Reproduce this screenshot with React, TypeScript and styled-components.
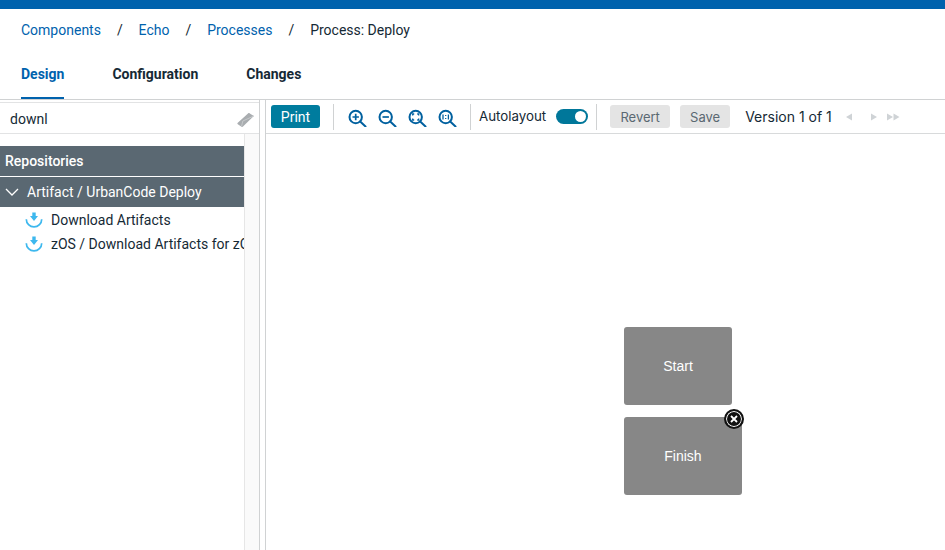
import styled, { createGlobalStyle } from "styled-components"

const GlobalStyle = createGlobalStyle`
  html, body {
    margin: 0;
    padding: 0;
    background: #fff;
  }
  * {
    box-sizing: border-box;
  }
`

const crumbs = ["Components", "Echo", "Processes"]
const tabs = ["Design", "Configuration", "Changes"]

const ZoomIcon = ({ kind }: { kind: "in" | "out" | "fit" | "actual" }) => (
  <S.Zoom width="20" height="20" viewBox="0 0 20 20" fill="none" stroke="#00609f" strokeWidth="2">
    <circle cx="8.700" cy="10" r="6.200" />
    <path d="M13.200 14.500l5.300 5" strokeLinecap="round" />
    {kind === "in" && <path d="M5.500 10h6.400M8.700 6.800v6.400" strokeWidth="1.700" />}
    {kind === "out" && <path d="M5.500 10h6.400" strokeWidth="1.700" />}
    {kind === "fit" && (
      <path d="M5.700 8.500V7h1.500M10.200 7h1.500v1.500M11.700 11.500V13h-1.500M7.200 13H5.700v-1.500" strokeWidth="1.300" />
    )}
    {kind === "actual" && (
      <path d="M6 7.400v5.200M11.400 7.400v5.200M8.700 8v1M8.700 11v1" strokeWidth="1.300" />
    )}
  </S.Zoom>
)

const DownloadIcon = () => (
  <S.ItemIcon width="18" height="16" viewBox="0 0 18 16">
    <path d="M1.300 7.200a7.700 7.700 0 0 0 15.400 0" fill="none" stroke="#3db8ee" strokeWidth="1.700" />
    <path d="M7.300 0.500h3.400v3.600h2.300L9 9 5 4.100h2.300z" fill="#3db8ee" />
  </S.ItemIcon>
)

const App = () => {
  return (
    <S.Page>
      <GlobalStyle />
      <S.TopBar />
      <S.Breadcrumbs>
        {crumbs.map((c) => (
          <S.CrumbGroup key={c}>
            <S.Crumb>{c}</S.Crumb>
            <S.Slash>/</S.Slash>
          </S.CrumbGroup>
        ))}
        <S.Current>Process: Deploy</S.Current>
      </S.Breadcrumbs>
      <S.Tabs>
        {tabs.map((t) => (
          <S.Tab key={t} $active={t === "Design"}>
            {t}
          </S.Tab>
        ))}
      </S.Tabs>
      <S.Main>
        <S.Sidebar>
          <S.Search>
            <S.SearchText>downl</S.SearchText>
            <S.Eraser width="18" height="16" viewBox="0 0 18 16">
              <path d="M0.500 11L11 1.500c.6-.5 1.200-.5 1.800-.1l4 2.600-10.800 10.600c-.5.500-1 .500-1.500.200L.8 12.300c-.5-.4-.6-.9-.3-1.300z" fill="#a9adb0" />
              <path d="M4.500 14.500L5.800 9 16.800 4" fill="none" stroke="#c6c9cb" strokeWidth="1" />
            </S.Eraser>
          </S.Search>
          <S.ListArea>
            <S.List>
              <S.SectionHeader>Repositories</S.SectionHeader>
              <S.GroupHeader>
                <svg width="14" height="8" viewBox="0 0 14 8" fill="none" stroke="#fff" strokeWidth="1.300">
                  <path d="M1 1l6 6 6-6" />
                </svg>
                Artifact / UrbanCode Deploy
              </S.GroupHeader>
              <S.Item>
                <DownloadIcon />
                <S.ItemText>Download Artifacts</S.ItemText>
              </S.Item>
              <S.Item>
                <DownloadIcon />
                <S.ItemText>zOS / Download Artifacts for zOS</S.ItemText>
              </S.Item>
            </S.List>
            <S.Scrollbar />
          </S.ListArea>
        </S.Sidebar>
        <S.Editor>
          <S.Toolbar>
            <S.PrintButton>Print</S.PrintButton>
            <S.Separator $left={13} $right={13} />
            <S.ZoomGroup>
              <ZoomIcon kind="in" />
              <ZoomIcon kind="out" />
              <ZoomIcon kind="fit" />
              <ZoomIcon kind="actual" />
            </S.ZoomGroup>
            <S.Separator $left={13} $right={8} />
            <S.ToggleLabel>Autolayout</S.ToggleLabel>
            <S.Toggle>
              <S.Knob />
            </S.Toggle>
            <S.Separator $left={8} $right={13} />
            <S.GreyButton $width={60}>Revert</S.GreyButton>
            <S.GreyButton $width={50}>Save</S.GreyButton>
            <S.Version>Version 1 of 1</S.Version>
            <S.Pager>
              <svg width="60" height="8" viewBox="0 0 60 8" fill="#cfd3d6">
                <path d="M0 4l6-3.500v7z" />
                <path d="M25 .5l6 3.500-6 3.500z" />
                <path d="M41 .5l6 3.500-6 3.500zM47.500 .5l6 3.500-6 3.500z" />
              </svg>
            </S.Pager>
          </S.Toolbar>
          <S.Canvas>
            <S.Node $x={358} $y={193} $w={108}>Start</S.Node>
            <S.Node $x={358} $y={283} $w={118}>
              Finish
              <S.Remove>
                <svg width="8" height="8" viewBox="0 0 8 8" stroke="#fff" strokeWidth="1.800">
                  <path d="M1 1l6 6M7 1L1 7" />
                </svg>
              </S.Remove>
            </S.Node>
          </S.Canvas>
        </S.Editor>
      </S.Main>
    </S.Page>
  )
}

const S = {
  Page: styled.div`
    width: 945px;
    height: 550px;
    overflow: hidden;
    display: flex;
    flex-direction: column;
    font-family: Roboto, "Liberation Sans", sans-serif;
    color: #152935;
  `,
  TopBar: styled.div`
    height: 9px;
    flex: none;
    background-color: #0062ad;
  `,
  Breadcrumbs: styled.div`
    height: 41px;
    flex: none;
    padding: 0 0 0 21px;
    display: flex;
    align-items: center;
    font-size: 14px;
  `,
  CrumbGroup: styled.div`
    display: flex;
    align-items: center;
  `,
  Crumb: styled.span`
    color: #0062ad;
  `,
  Slash: styled.span`
    width: 37.700px;
    text-align: center;
    color: #152935;
  `,
  Current: styled.span`
    color: #152935;
  `,
  Tabs: styled.div`
    height: 50px;
    flex: none;
    padding-left: 21px;
    display: flex;
    gap: 48px;
    border-bottom: 1px solid #d0d2d3;
  `,
  Tab: styled.div<{ $active?: boolean }>`
    height: 49px;
    padding-top: 16px;
    font-size: 14px;
    font-weight: 700;
    color: ${(p) => (p.$active ? "#0062ad" : "#152935")};
    border-bottom: ${(p) => (p.$active ? "2px solid #0062ad" : "none")};
  `,
  Main: styled.div`
    flex: 1;
    display: flex;
    min-height: 0;
  `,
  Sidebar: styled.div`
    width: 260px;
    flex: none;
    padding-top: 2px;
    display: flex;
    flex-direction: column;
    border-right: 1px solid #d0d2d3;
  `,
  Search: styled.div`
    height: 32px;
    flex: none;
    display: flex;
    align-items: center;
    justify-content: space-between;
    padding: 1px 4px 0 10px;
    border-top: 1px solid #e2e3e4;
    border-bottom: 1px solid #e2e3e4;
  `,
  SearchText: styled.span`
    font-size: 14px;
    color: #152935;
  `,
  Eraser: styled.svg`
    margin-top: 3px;
  `,
  ListArea: styled.div`
    flex: 1;
    display: flex;
    min-height: 0;
  `,
  List: styled.div`
    width: 244px;
    flex: none;
    padding-top: 12px;
    overflow: hidden;
  `,
  Scrollbar: styled.div`
    flex: 1;
    background-color: #fafafa;
    border-left: 1px solid #e6e6e6;
  `,
  SectionHeader: styled.div`
    height: 30px;
    padding-left: 5px;
    display: flex;
    align-items: center;
    background-color: #5a6872;
    color: #fff;
    font-size: 14px;
    font-weight: 500;
  `,
  GroupHeader: styled.div`
    height: 30px;
    margin-top: 1px;
    padding-left: 5px;
    display: flex;
    align-items: center;
    gap: 8px;
    background-color: #5a6872;
    color: #fff;
    font-size: 14px;
    font-weight: 400;
    white-space: nowrap;
  `,
  Item: styled.div`
    height: 24px;
    padding-left: 25px;
    display: flex;
    align-items: center;
    gap: 8px;
    white-space: nowrap;
    position: relative;
    top: 1px;
  `,
  ItemIcon: styled.svg`
    flex: none;
  `,
  ItemText: styled.span`
    font-size: 14px;
    color: #152935;
  `,
  Editor: styled.div`
    flex: 1;
    min-width: 0;
    margin-left: 5px;
    border-left: 1px solid #d0d2d3;
    display: flex;
    flex-direction: column;
  `,
  Toolbar: styled.div`
    height: 34px;
    flex: none;
    padding: 0 0 0 5px;
    display: flex;
    align-items: center;
    border-bottom: 1px solid #d8dadb;
  `,
  PrintButton: styled.button`
    width: 49px;
    height: 23px;
    padding: 0;
    border: none;
    border-radius: 3px;
    background-color: #007c9e;
    color: #fff;
    font-family: Roboto, sans-serif;
    font-size: 14px;
    font-weight: 400;
  `,
  Separator: styled.div<{ $left: number; $right: number }>`
    width: 1px;
    height: 26px;
    flex: none;
    background-color: #d0d2d3;
    margin-left: ${(p) => p.$left}px;
    margin-right: ${(p) => p.$right}px;
  `,
  ZoomGroup: styled.div`
    display: flex;
    align-items: center;
    gap: 10px;
  `,
  Zoom: styled.svg`
    display: block;
    flex: none;
  `,
  ToggleLabel: styled.span`
    font-family: Inter, Roboto, sans-serif;
    font-size: 13.300px;
    color: #152935;
    position: relative;
    top: -1px;
  `,
  Toggle: styled.div`
    width: 32px;
    height: 15px;
    margin-left: 10px;
    padding-right: 2px;
    display: flex;
    align-items: center;
    justify-content: flex-end;
    border-radius: 8px;
    background-color: #00779a;
  `,
  Knob: styled.div`
    width: 11px;
    height: 11px;
    border-radius: 50%;
    background-color: #fff;
  `,
  GreyButton: styled.button<{ $width: number }>`
    width: ${(p) => p.$width}px;
    height: 23px;
    margin-right: 10px;
    padding: 0;
    border: none;
    border-radius: 3px;
    background-color: #e4e4e4;
    color: #5a6872;
    font-family: Inter, Roboto, sans-serif;
    font-size: 13px;
  `,
  Version: styled.span`
    margin-left: 5px;
    font-family: Inter, Roboto, sans-serif;
    font-size: 14px;
    color: #152935;
  `,
  Pager: styled.div`
    margin-left: 14px;
    display: flex;
    align-items: center;
  `,
  Canvas: styled.div`
    flex: 1;
    position: relative;
  `,
  Node: styled.div<{ $x: number; $y: number; $w: number }>`
    position: absolute;
    left: ${(p) => p.$x}px;
    top: ${(p) => p.$y}px;
    width: ${(p) => p.$w}px;
    height: 78px;
    display: flex;
    align-items: center;
    justify-content: center;
    border-radius: 3px;
    background-color: #878787;
    color: #fff;
    font-family: "Liberation Sans", sans-serif;
    font-size: 14px;
  `,
  Remove: styled.div`
    position: absolute;
    top: -8px;
    right: -2px;
    width: 20px;
    height: 20px;
    display: flex;
    align-items: center;
    justify-content: center;
    border-radius: 50%;
    background-color: #111;
    border: 2px solid #111;
    box-shadow: inset 0 0 0 1px #fff;
  `,
}

export default App
